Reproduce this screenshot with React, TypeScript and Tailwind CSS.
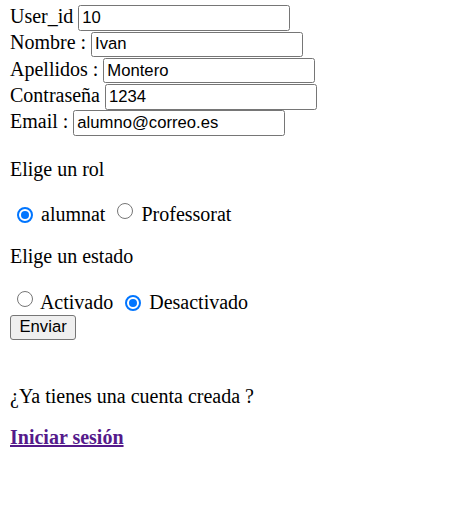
import React from "react";

function Radio({ checked }: { checked?: boolean }) {
  if (checked) {
    return (
      <span className="inline-flex box-border w-[16px] h-[16px] rounded-full border-[2px] border-[#0075ff] bg-white items-center justify-center align-[2px] ml-[6.5px] mr-[3.5px]">
        <span className="block w-[8px] h-[8px] rounded-full bg-[#0075ff]" />
      </span>
    );
  }
  return (
    <span className="inline-block box-border w-[16px] h-[16px] rounded-full border border-[#767676] bg-white align-[2px] ml-[6.5px] mr-[3.5px]" />
  );
}

function Row({ label, value }: { label: string; value: string }) {
  return (
    <div className="flex items-baseline h-[26.3px] gap-[5px]">
      <span className="leading-[23px] whitespace-pre">{label}</span>
      <input
        readOnly
        value={value}
        className="box-border w-[212px] h-[25.6px] border border-[#767676] rounded-[2.5px] bg-white px-[3px] text-black font-['Liberation_Sans',Arial,sans-serif] text-[16.67px] leading-normal outline-none"
      />
    </div>
  );
}

export default function App() {
  return (
    <div className="bg-white min-h-[506px] px-[10px] pt-[5px] font-['Liberation_Serif','Times_New_Roman',serif] text-[20px] leading-[23px] text-black">
      <Row label="User_id" value="10" />
      <Row label="Nombre :" value="Ivan" />
      <Row label="Apellidos :" value="Montero" />
      <Row label="Contraseña" value="1234" />
      <Row label="Email :" value="alumno@correo.es" />

      <p className="mt-[22px]">Elige un rol</p>
      <div className="mt-[22px] whitespace-nowrap">
        <Radio checked />
        {" "}alumnat{" "}
        <Radio />
        {" "}Professorat
      </div>

      <p className="mt-[18.6px]">Elige un estado</p>
      <div className="mt-[22.5px] whitespace-nowrap">
        <Radio />
        {" "}Activado{" "}
        <Radio checked />
        {" "}Desactivado
      </div>

      <div className="mt-[0.5px]">
        <button className="box-border h-[25px] px-[8.5px] border border-[#767676] rounded-[3px] bg-[#efefef] text-black font-['Liberation_Sans',Arial,sans-serif] text-[16.67px] leading-none">
          Enviar
        </button>
      </div>

      <p className="mt-[44.75px]">¿Ya tienes una cuenta creada ?</p>
      <p className="mt-[18.6px]">
        <a href="#" className="font-bold text-[#551a8b] underline">
          Iniciar sesión
        </a>
      </p>
    </div>
  );
}
